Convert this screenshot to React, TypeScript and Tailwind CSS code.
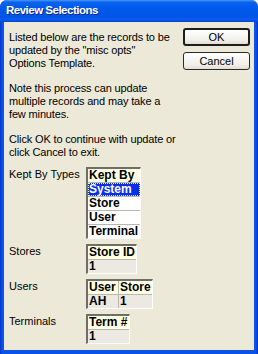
import React from 'react';

type GridProps = {
  widths: number[];
  header: string[];
  rows: string[][];
  white?: boolean;
  selected?: number;
};

const Grid: React.FC<GridProps> = ({ widths, header, rows, white, selected }) => {
  const all = [header, ...rows];
  return (
    <div className="border-t-2 border-l-2 border-r border-b border-t-[#6e6d68] border-l-[#6e6d68] border-r-white border-b-white">
      {all.map((row, r) => {
        const isHeader = r === 0;
        const isLast = r === all.length - 1;
        return (
          <div key={r} className="flex">
            {row.map((cell, c) => {
              const isSel = !isHeader && selected === r - 1;
              const bg = isHeader
                ? 'bg-[#ffffe1] text-black'
                : isSel
                ? 'bg-[#0c2ee6] text-white'
                : white
                ? 'bg-white text-black'
                : 'bg-[#ebe9e1] text-black';
              return (
                <div
                  key={c}
                  style={{ width: widths[c] + (c < row.length - 1 ? 1 : 0) }}
                  className={`${isLast ? 'h-[13px]' : 'h-[14px] border-b'} ${
                    c < row.length - 1 ? 'border-r' : ''
                  } border-[#b8b6ae] ${bg} overflow-hidden`}
                >
                  <div
                    className={`h-full pl-[1px] text-[12px] leading-[13px] font-bold whitespace-nowrap ${
                      isSel ? 'outline-1 outline-dotted outline-[#ffff99] -outline-offset-1' : ''
                    }`}
                  >
                    {cell}
                  </div>
                </div>
              );
            })}
          </div>
        );
      })}
    </div>
  );
};

const Row: React.FC<{ label: string; children: React.ReactNode }> = ({ label, children }) => (
  <div className="flex">
    <div className="w-[77px] pt-[1px] leading-[13px]">{label}</div>
    {children}
  </div>
);

export default function App() {
  return (
    <div
      className="w-[258px] h-[354px] bg-white text-[11px] text-black"
      style={{ fontFamily: '"Liberation Sans", Arial, sans-serif' }}
    >
      <div className="flex flex-col h-full rounded-t-[7px] overflow-hidden bg-[#0845dc]">
        {/* title bar */}
        <div className="h-[22px] shrink-0 flex items-center pl-[6px] bg-[linear-gradient(to_bottom,#4a98fa_0%,#0a62f0_10%,#0058ea_40%,#0055e5_75%,#0a5cf0_90%,#0541d0_100%)]">
          <span className="text-white font-bold text-[11.5px] tracking-[-0.5px] [text-shadow:1px_1px_0_#0a2a8c]">
            Review Selections
          </span>
        </div>

        {/* frame + client */}
        <div className="flex-1 flex px-[4px] pb-[4px] bg-[linear-gradient(to_right,#0032c8,#0a52e8_2px,#0a52e8_calc(100%-2px),#0030c0)]">
          <div className="flex-1 bg-[#ece9d8] pl-[5px] pr-[4px] pt-[6px]">
            <div className="flex">
              <div className="flex-1 pt-[3px] leading-[13px] tracking-[-0.15px]">
                <p className="mb-[12px]">
                  Listed below are the records to be
                  <br />
                  updated by the "misc opts"
                  <br />
                  Options Template.
                </p>
                <p className="mb-[12px]">
                  Note this process can update
                  <br />
                  multiple records and may take a
                  <br />
                  few minutes.
                </p>
                <p>
                  Click OK to continue with update or
                  <br />
                  click Cancel to exit.
                </p>
              </div>
              <div className="w-[67px] flex flex-col gap-[6px]">
                <button className="h-[18px] rounded-[3px] border-2 border-[#1e1e1e] bg-[linear-gradient(to_bottom,#ffffff,#f1f0ea_70%,#e2ded3)] text-[11px] leading-none">
                  OK
                </button>
                <button className="h-[18px] rounded-[3px] border border-[#2a2a2a] bg-[linear-gradient(to_bottom,#ffffff,#f1f0ea_70%,#e2ded3)] text-[11px] leading-none">
                  Cancel
                </button>
              </div>
            </div>

            <div className="mt-[8px] flex flex-col gap-[5px]">
              <Row label="Kept By Types">
                <Grid
                  widths={[52]}
                  header={['Kept By']}
                  rows={[['System'], ['Store'], ['User'], ['Terminal']]}
                  white
                  selected={0}
                />
              </Row>
              <Row label="Stores">
                <Grid widths={[48]} header={['Store ID']} rows={[['1']]} />
              </Row>
              <Row label="Users">
                <Grid widths={[30, 33]} header={['User', 'Store']} rows={[['AH', '1']]} />
              </Row>
              <Row label="Terminals">
                <Grid widths={[41]} header={['Term #']} rows={[['1']]} />
              </Row>
            </div>
          </div>
        </div>
      </div>
    </div>
  );
}
